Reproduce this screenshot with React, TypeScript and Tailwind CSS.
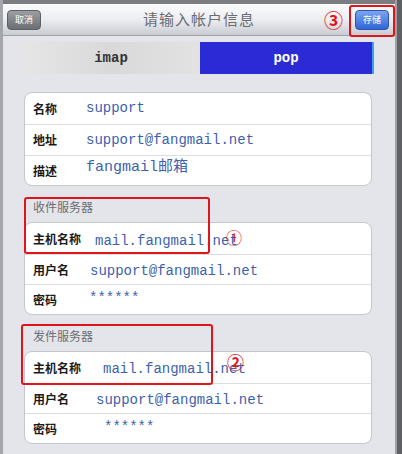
const cjk = "font-['Noto_Sans_CJK_SC',sans-serif]";
const mono = "font-['Liberation_Mono','Noto_Sans_CJK_SC',monospace]";

interface Row {
    label: string;
    value: string;
    indent: string;
    lift?: string;
    height: string;
}

function Card({ rows }: { rows: Row[] }) {
    return (
        <div className="overflow-hidden rounded-[8px] border border-[#c4c7cd] bg-white">
            {rows.map((r, i) => (
                <div
                    key={r.label}
                    className={`flex items-center pl-[8px] ${r.height} ${i > 0 ? 'border-t border-[#dadde2]' : ''}`}
                >
                    <span className={`${cjk} w-[53px] shrink-0 text-[12px] font-semibold text-[#1a1a1a]`}>{r.label}</span>
                    <span className={`${mono} ${r.indent} ${r.lift ?? ''} whitespace-nowrap text-[14px] text-[#3d5fae]`}>
                        {r.value}
                    </span>
                </div>
            ))}
        </div>
    );
}

function SectionTitle({ text }: { text: string }) {
    return (
        <div className={`${cjk} flex h-[36px] items-end pb-[6px] pl-[9px] text-[12px] text-[#6a6d72]`}>{text}</div>
    );
}

export default function App() {
    return (
        <div className="relative flex h-[454px] w-[402px] overflow-hidden bg-[#7a7c80]">
            <div className="w-[3px] bg-[#a3a6ab]" />
            <div className="flex w-[392px] flex-col pt-[4px]">
                {/* top bar */}
                <div className="relative flex h-[32px] items-center justify-between border-b border-[#9fa3aa] bg-gradient-to-b from-[#fbfbfc] via-[#eceef1] to-[#c9ccd3] px-[4px]">
                    <button className={`${cjk} h-[20px] w-[34px] rounded-[4px] border border-[#5d6066] bg-gradient-to-b from-[#9b9ea3] to-[#6b6e74] text-[9px] text-white`}>
                        取消
                    </button>
                    <span className={`${cjk} absolute left-0 right-0 text-center text-[15px] tracking-[1px] text-[#6c6d70]`}>
                        请输入帐户信息
                    </span>
                    <button className={`${cjk} relative mr-[2px] h-[20px] w-[34px] rounded-[4px] border border-[#2d55b0] bg-gradient-to-b from-[#7aa6f0] to-[#2f65d6] text-[9px] text-white`}>
                        存储
                    </button>
                </div>

                <div className="flex flex-1 flex-col bg-[#e3e5ea] pl-[21px] pr-[23px]">
                    {/* segmented */}
                    <div className="-ml-[2px] mt-[6px] flex h-[32px] w-[352px] font-['Liberation_Mono',monospace] text-[14px] font-bold">
                        <div className="flex w-[178px] items-center justify-center bg-gradient-to-r from-[#e6e6e6] via-[#d9d9d9] to-[#e2e2e2] text-[#333]">
                            imap
                        </div>
                        <div className="flex w-[172px] items-center justify-center bg-[#2b2bd6] text-white">pop</div>
                        <div className="w-[2px] bg-[#3aa2ea]" />
                    </div>

                    <div className="mt-[18px]">
                        <Card
                            rows={[
                                { label: '名称', value: 'support', indent: 'ml-0', height: 'h-[31px]' },
                                { label: '地址', value: 'support@fangmail.net', indent: 'ml-0', height: 'h-[31px]' },
                                {
                                    label: '描述',
                                    value: 'fangmail邮箱',
                                    indent: 'ml-0',
                                    lift: 'text-[15px] -mt-[5px]',
                                    height: 'h-[30px]',
                                },
                            ]}
                        />
                    </div>

                    <SectionTitle text="收件服务器" />
                    <Card
                        rows={[
                            { label: '主机名称', value: 'mail.fangmail.net', indent: 'ml-[9px]', lift: 'mt-[6px]', height: 'h-[31px]' },
                            { label: '用户名', value: 'support@fangmail.net', indent: 'ml-[4px]', lift: 'mt-[3px]', height: 'h-[30px]' },
                            { label: '密码', value: '******', indent: 'ml-[3px]', lift: '-mt-[2px]', height: 'h-[30px]' },
                        ]}
                    />

                    <SectionTitle text="发件服务器" />
                    <Card
                        rows={[
                            { label: '主机名称', value: 'mail.fangmail.net', indent: 'ml-[17px]', lift: 'mt-[3px]', height: 'h-[31px]' },
                            { label: '用户名', value: 'support@fangmail.net', indent: 'ml-[10px]', lift: 'mt-[4px]', height: 'h-[30px]' },
                            { label: '密码', value: '******', indent: 'ml-[18px]', lift: '-mt-[3px]', height: 'h-[30px]' },
                        ]}
                    />
                </div>
            </div>
            <div className="w-[2px] bg-[#9ea1a6]" />
            <div className="w-[5px] bg-[#5e6064]" />

            {/* annotations */}
            <div className="pointer-events-none absolute left-[349px] top-[5px] h-[32px] w-[46px] rounded-[3px] border-2 border-[#e0141b]" />
            <span className={`${cjk} absolute left-[324px] top-[7px] text-[19px] font-bold leading-[26px] text-[#e0141b]`}>③</span>
            <div className="pointer-events-none absolute left-[24px] top-[197px] h-[57px] w-[186px] rounded-[3px] border-2 border-[#e0141b]" />
            <span className={`${cjk} absolute left-[226px] top-[228px] text-[16px] leading-[18px] text-[#e0141b]`}>①</span>
            <div className="pointer-events-none absolute left-[21px] top-[324px] h-[61px] w-[192px] rounded-[3px] border-2 border-[#e0141b]" />
            <span className={`${cjk} absolute left-[227px] top-[353px] text-[17px] font-bold leading-[18px] text-[#e0141b]`}>②</span>
        </div>
    );
}
